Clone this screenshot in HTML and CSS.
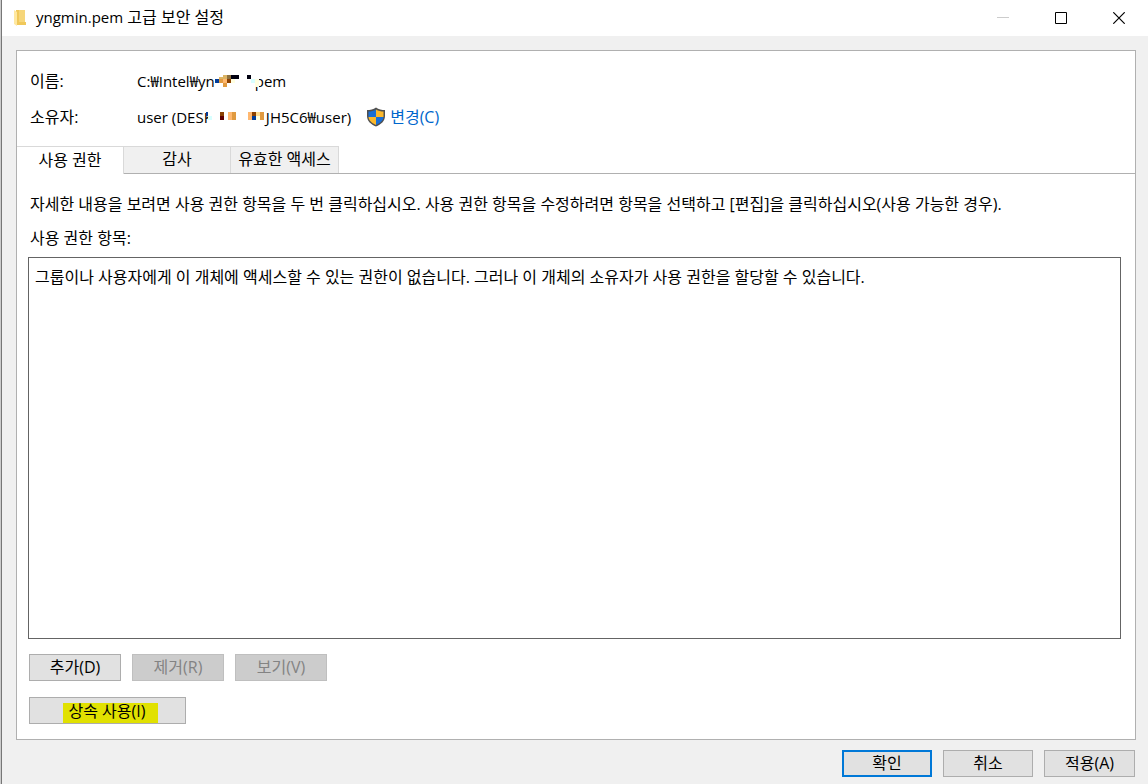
FILE: index.html
```
<!DOCTYPE html>
<html lang="ko">
<head>
    <meta charset="UTF-8">
    <title>yngmin.pem 고급 보안 설정</title>
    <link rel="stylesheet" href="styles.css">
</head>
<body>
    <div class="window">
        <header class="title-bar">
            <svg class="folder-icon" width="14" height="18" viewBox="0 0 14 18">
                <path d="M2 1h9v12h1v3H2z" fill="#f0c85a"/>
                <path d="M5 1h6v12H5z" fill="#f6d67a"/>
                <path d="M0 1l3 2v14l-3-2z" fill="#ffe8a0"/>
            </svg>
            <h1 class="title"><span class="latin">yngmin.pem</span> 고급 보안 설정</h1>
            <div class="window-controls">
                <button class="control-btn" aria-label="최소화" disabled>
                    <svg width="12" height="12" viewBox="0 0 12 12"><path d="M0 5.5h12" stroke="#ccc"/></svg>
                </button>
                <button class="control-btn" aria-label="최대화">
                    <svg width="12" height="12" viewBox="0 0 12 12"><path d="M.5 .5h11v11H.5z" fill="none" stroke="#000"/></svg>
                </button>
                <button class="control-btn" aria-label="닫기">
                    <svg width="12" height="12" viewBox="0 0 12 12"><path d="M.3 .3l11.4 11.4M11.7 .3L.3 11.7" stroke="#000" stroke-width="1.2"/></svg>
                </button>
            </div>
        </header>

        <main class="panel">
            <dl class="info">
                <dt>이름:</dt>
                <dd>
                    <span class="latin">C:₩Intel₩yn</span>
                    <svg class="mosaic mosaic-name" width="44" height="18" viewBox="0 0 44 18" shape-rendering="crispEdges">
                        <path d="M4 0h36v18H4z" fill="#fff"/>
                        <path d="M0 7h4v4H0z" fill="#003c98"/>
                        <path d="M4 5h4v2H4zM8 3h4v4H8z" fill="#dcb464"/>
                        <path d="M12 3h4v4h-4z" fill="#8c7040"/>
                        <path d="M16 3h8v4h-8zM32 3h4v4h-4z" fill="#000010"/>
                        <path d="M4 7h4v4H4zM8 11h4v4H8z" fill="#e09a40"/>
                        <path d="M8 7h4v4H8z" fill="#ffb870"/>
                        <path d="M12 7h4v4h-4z" fill="#8b4000"/>
                        <path d="M16 7h4v4h-4zM40 7h4v8h-4z" fill="#ffffe0"/>
                        <path d="M36 7h4v4h-4z" fill="#d8ffff"/>
                    </svg>
                    <span class="latin">pem</span>
                </dd>
                <dt>소유자:</dt>
                <dd>
                    <span class="latin">user (DESK</span>
                    <svg class="mosaic mosaic-owner" width="60" height="18" viewBox="0 0 60 18" shape-rendering="crispEdges">
                        <path d="M2 0h56v18H2z" fill="#fff"/>
                        <path d="M0 4h2v4H0z" fill="#003c98"/>
                        <path d="M2 8h4v4H2z" fill="#d8ffff"/>
                        <path d="M14 4h4v4h-4z" fill="#8b4000"/>
                        <path d="M14 8h4v4h-4z" fill="#600000"/>
                        <path d="M22 4h4v8h-4zM42 4h4v8h-4z" fill="#ffb870"/>
                        <path d="M46 4h4v4h-4z" fill="#8b4000"/>
                        <path d="M26 4h4v8h-4zM54 4h4v8h-4z" fill="#e09a40"/>
                        <path d="M46 8h4v4h-4z" fill="#003c98"/>
                        <path d="M50 4h4v4h-4z" fill="#ffdc90"/>
                        <path d="M50 8h4v4h-4z" fill="#ffffe0"/>
                    </svg>
                    <span class="latin">JH5C6₩user)</span>
                    <a class="change-link" href="#">
                        <svg width="20" height="20" viewBox="0 0 20 20">
                            <path d="M10 .5C7.500 2.500 4 3 1 3v6c0 5 4 8.500 9 10.500 5-2 9-5.500 9-10.500V3c-3 0-6.500-.5-9-2.500z" fill="#505050"/>
                            <path d="M10 2.500C7.500 4 5 4.500 2.500 4.500V10H10z" fill="#1a6fd6"/>
                            <path d="M10 2.500C12.500 4 15 4.500 17.500 4.500V10H10z" fill="#fcb92c"/>
                            <path d="M2.500 10H10v8C6 16.300 3 14 2.500 10z" fill="#fcb92c"/>
                            <path d="M17.500 10H10v8c4-1.700 7-4 7.500-8z" fill="#1a6fd6"/>
                        </svg>
                        <span>변경(C)</span>
                    </a>
                </dd>
            </dl>

            <div class="tabs" role="tablist">
                <button class="tab active" role="tab" aria-selected="true">사용 권한</button>
                <button class="tab" role="tab" aria-selected="false">감사</button>
                <button class="tab" role="tab" aria-selected="false">유효한 액세스</button>
            </div>

            <section class="tab-content">
                <p class="guide">자세한 내용을 보려면 사용 권한 항목을 두 번 클릭하십시오. 사용 권한 항목을 수정하려면 항목을 선택하고 [편집]을 클릭하십시오(사용 가능한 경우).</p>
                <p class="list-label" id="listLabel">사용 권한 항목:</p>
                <div class="permission-list" aria-labelledby="listLabel">그룹이나 사용자에게 이 개체에 액세스할 수 있는 권한이 없습니다. 그러나 이 개체의 소유자가 사용 권한을 할당할 수 있습니다.</div>
                <div class="actions">
                    <button class="btn">추가(D)</button>
                    <button class="btn" disabled>제거(R)</button>
                    <button class="btn" disabled>보기(V)</button>
                </div>
                <button class="btn inherit-btn"><span class="highlight">상속 사용(I)</span></button>
            </section>
        </main>

        <footer class="dialog-buttons">
            <button class="btn primary">확인</button>
            <button class="btn">취소</button>
            <button class="btn">적용(A)</button>
        </footer>
    </div>
</body>
</html>
```
FILE: styles.css
```
* {
    box-sizing: border-box;
    margin: 0;
    padding: 0;
}

body {
    font-family: 'Open Sans', 'Noto Sans CJK KR', sans-serif;
    font-size: 16px;
    line-height: 20px;
    color: #000;
    background-color: #f0f0f0;
}

button {
    font: inherit;
    color: inherit;
}

.latin {
    font-size: 15px;
}

.window {
    display: flex;
    flex-direction: column;
    min-height: 100vh;
    padding-bottom: 7px;
    border-left: 1px solid #ccc;
    box-shadow: inset 1px 0 #777;
}

.title-bar {
    display: flex;
    align-items: center;
    height: 36px;
    margin-left: 1px;
    padding-left: 12px;
    background-color: #fff;
}

.folder-icon {
    margin-right: 8px;
}

.title {
    flex: 1;
    padding-bottom: 2px;
    font-size: 16px;
    font-weight: normal;
}

.window-controls {
    display: flex;
}

.control-btn {
    display: flex;
    align-items: center;
    justify-content: center;
    width: 58px;
    height: 34px;
    border: none;
    background: none;
}

.panel {
    flex: 1;
    display: flex;
    flex-direction: column;
    margin: 14px 12px 10px 15px;
    border: 1px solid #b0b0b0;
    background-color: #fff;
}

.info {
    display: grid;
    grid-template-columns: 107px 1fr;
    row-gap: 16px;
    padding: 20px 13px 19px;
}

.info dd {
    display: flex;
    align-items: center;
    white-space: nowrap;
}

.mosaic {
    flex: none;
    z-index: 1;
}

.mosaic-name {
    margin: 0 -4px 0 0;
}

.mosaic-owner {
    margin: 0 0 0 -7px;
}

.change-link {
    display: flex;
    align-items: center;
    gap: 4px;
    margin-left: 15px;
    color: #0066cc;
    text-decoration: none;
}

.tabs {
    display: flex;
    height: 28px;
    border-bottom: 1px solid #b0b0b0;
}

.tab {
    width: 107px;
    padding-bottom: 3px;
    border: 1px solid #d9d9d9;
    border-left: none;
    border-bottom: none;
    background-color: #f0f0f0;
}

.tab.active {
    height: 28px;
    padding-bottom: 2px;
    background-color: #fff;
}

.tab:last-child {
    width: 108px;
}

.tab-content {
    flex: 1;
    display: flex;
    flex-direction: column;
    padding: 20px 14px 15px 11px;
}

.guide,
.list-label {
    padding-left: 2px;
}

.guide {
    margin-bottom: 14px;
}

.list-label {
    margin-bottom: 9px;
}

.permission-list {
    flex: 1;
    padding: 9px 6px;
    border: 1px solid #646464;
}

.actions {
    display: flex;
    gap: 11px;
    margin: 15px 0 16px 1px;
}

.btn {
    width: 92px;
    height: 27px;
    padding-bottom: 2px;
    border: 1px solid #adadad;
    background-color: #e1e1e1;
}

.btn:disabled {
    border-color: #bfbfbf;
    background-color: #ccc;
    color: #838383;
}

.inherit-btn {
    display: flex;
    justify-content: center;
    align-items: flex-end;
    width: 157px;
    margin-left: 1px;
    padding: 0 0 0 6px;
}

.highlight {
    padding: 0 13px 4px 6px;
    line-height: 16px;
    background-color: #e1e100;
}

.dialog-buttons {
    display: flex;
    justify-content: flex-end;
    gap: 11px;
    padding-right: 13px;
}

.dialog-buttons .btn {
    width: 90px;
}

.dialog-buttons .btn:last-child {
    width: 91px;
}

.btn.primary {
    border: 2px solid #0078d7;
}
```
